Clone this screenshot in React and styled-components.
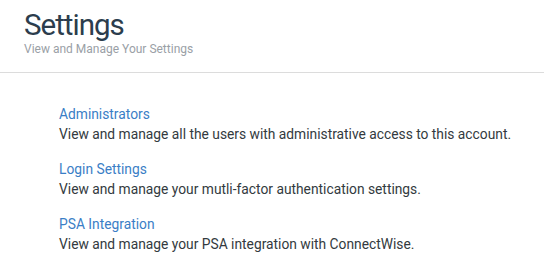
import React from "react";
import styled, { createGlobalStyle } from "styled-components";

const Global = createGlobalStyle`
  html, body { margin: 0; padding: 0; background: #fff; }
  body { font-family: Roboto, "Liberation Sans", sans-serif; }
`;

const Page = styled.div`
  width: 544px;
  min-height: 269px;
  background: #fff;
`;

const Header = styled.header`
  padding: 8px 24px 16px;
  border-bottom: 1px solid #dcdcdc;
`;

const Title = styled.h1`
  margin: 0;
  font-size: 29.5px;
  font-weight: 400;
  line-height: 34px;
  color: #2c3d4d;
  letter-spacing: -1px;
`;

const Subtitle = styled.div`
  font-size: 12px;
  line-height: 14px;
  color: #9aa0a6;
`;

const List = styled.div`
  display: flex;
  flex-direction: column;
  gap: 15px;
  padding: 31px 0 0 59px;
`;

const Item = styled.div`
  display: flex;
  flex-direction: column;
`;

const ItemLink = styled.a`
  font-size: 13.8px;
  line-height: 20px;
  color: #3a7ec6;
  text-decoration: none;
  align-self: flex-start;
`;

const ItemDesc = styled.div`
  font-size: 13.8px;
  line-height: 20px;
  color: #333a40;
  white-space: nowrap;
`;

const items = [
  { title: "Administrators", desc: "View and manage all the users with administrative access to this account." },
  { title: "Login Settings", desc: "View and manage your mutli-factor authentication settings." },
  { title: "PSA Integration", desc: "View and manage your PSA integration with ConnectWise." },
];

export default function App() {
  return (
    <Page>
      <Global />
      <Header>
        <Title>Settings</Title>
        <Subtitle>View and Manage Your Settings</Subtitle>
      </Header>
      <List>
        {items.map((it) => (
          <Item key={it.title}>
            <ItemLink href="#">{it.title}</ItemLink>
            <ItemDesc>{it.desc}</ItemDesc>
          </Item>
        ))}
      </List>
    </Page>
  );
}
